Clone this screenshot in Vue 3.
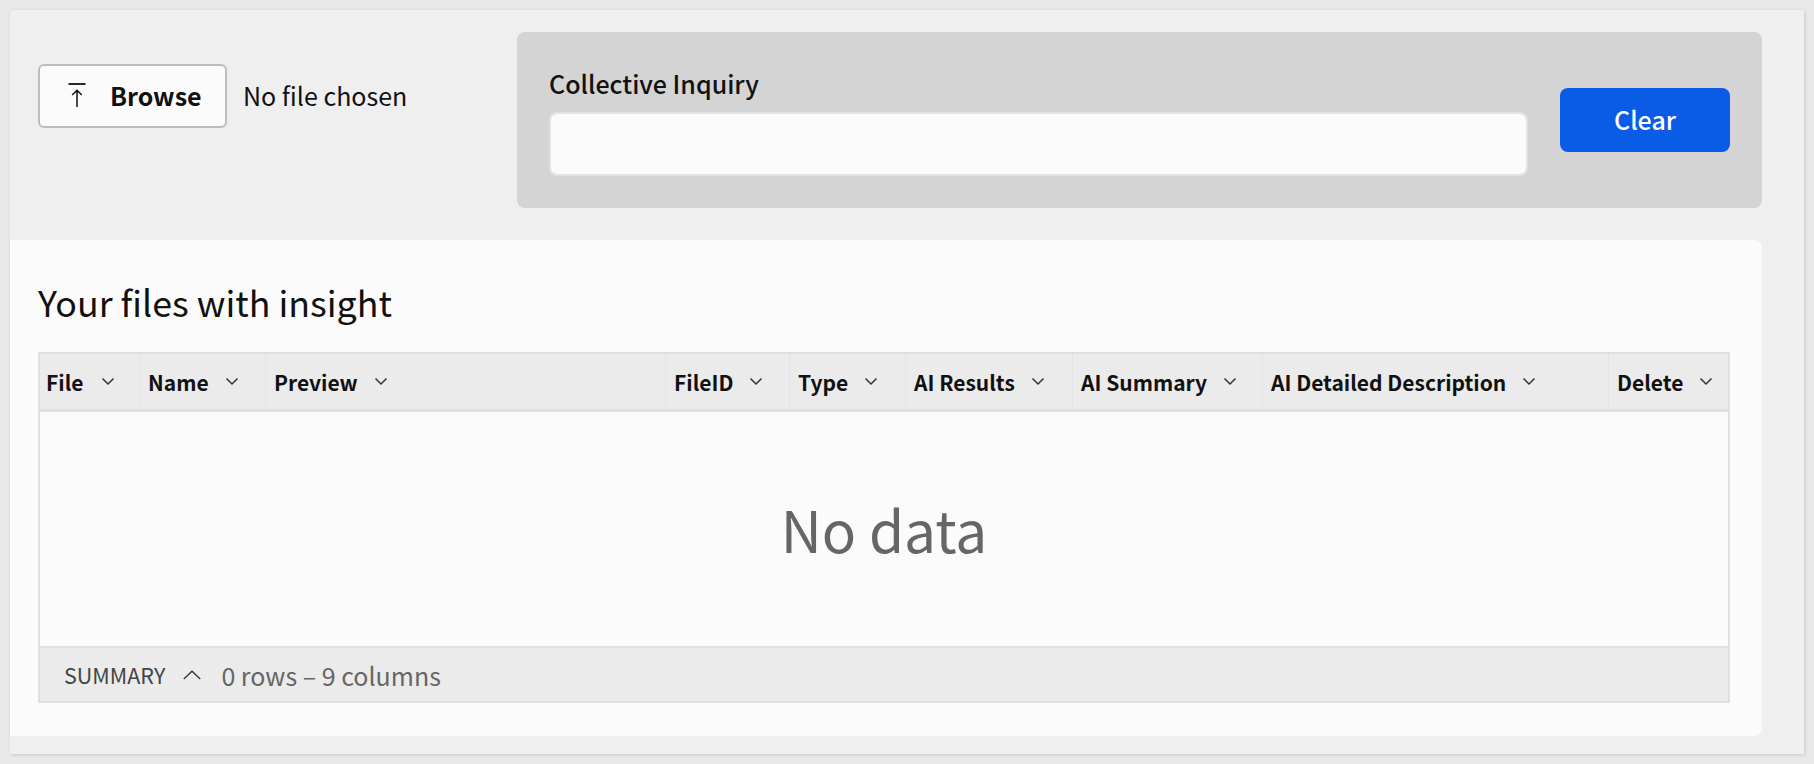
<template>
  <div class="page">
    <div class="panel">
      <div class="top-row">
        <div class="file-side">
          <button class="browse-btn">
            <svg class="upload-icon" width="18" height="24" viewBox="0 0 18 24">
              <path d="M0.5 1h17" fill="none" stroke="#111" stroke-width="1.8" />
              <path d="M9 7.5V24M4.2 12L9 7.2l4.8 4.8" fill="none" stroke="#111" stroke-width="1.5" />
            </svg>
            <span>Browse</span>
          </button>
          <span class="file-name">No file chosen</span>
        </div>
        <div class="inquiry">
          <div class="inquiry-field">
            <label class="inquiry-label">Collective Inquiry</label>
            <input class="inquiry-input" type="text" />
          </div>
          <button class="clear-btn">Clear</button>
        </div>
      </div>

      <div class="card">
        <h2 class="card-title">Your files with insight</h2>
        <div class="table">
          <div class="thead">
            <div v-for="col in columns" :key="col" class="th">
              <span>{{ col }}</span>
              <svg width="14" height="9" viewBox="0 0 14 9">
                <path d="M1.5 1.5L7 7l5.5-5.5" fill="none" stroke="#333" stroke-width="1.5" />
              </svg>
            </div>
          </div>
          <div class="tbody">No data</div>
          <div class="tfoot">
            <span class="summary">SUMMARY</span>
            <svg width="18" height="10" viewBox="0 0 18 10">
              <path d="M0.8 9L9 1.2 17.2 9" fill="none" stroke="#333" stroke-width="1.3" />
            </svg>
            <span class="counts">0 rows – 9 columns</span>
          </div>
        </div>
      </div>
    </div>
  </div>
</template>

<script setup>
const columns = [
  'File',
  'Name',
  'Preview',
  'FileID',
  'Type',
  'AI Results',
  'AI Summary',
  'AI Detailed Description',
  'Delete'
]
</script>

<style>
html, body {
  margin: 0;
  background: #e9e9e9;
}
</style>

<style scoped>
.page {
  height: 764px;
  padding: 10px;
  box-sizing: border-box;
  font-family: "Noto Sans CJK JP", "Noto Sans", sans-serif;
  color: #111;
  overflow: hidden;
}

.panel {
  height: 744px;
  background: #efefef;
  box-shadow: 1px 1px 4px rgba(0, 0, 0, 0.14);
  padding: 22px 42px 18px 0;
  box-sizing: border-box;
  display: flex;
  flex-direction: column;
}

.top-row {
  display: flex;
  height: 176px;
}

.file-side {
  width: 507px;
  padding: 32px 0 0 28px;
  box-sizing: border-box;
  display: flex;
  align-items: flex-start;
  gap: 16px;
}

.browse-btn {
  width: 189px;
  height: 64px;
  box-sizing: border-box;
  background: #fbfbfb;
  border: 2px solid #bdbdbd;
  border-radius: 6px;
  display: flex;
  align-items: center;
  padding: 0 0 2px 28px;
  gap: 24px;
  font-family: inherit;
  font-size: 25px;
  font-weight: 700;
  line-height: 32px;
  color: #111;
}

.upload-icon {
  flex-shrink: 0;
}

.file-name {
  font-size: 25px;
  line-height: 62px;
}

.inquiry {
  flex: 1;
  background: #d4d4d4;
  border-radius: 8px;
  padding: 0 32px;
  display: flex;
  align-items: center;
  gap: 32px;
}

.inquiry-field {
  flex: 1;
  padding-top: 33px;
  align-self: flex-start;
}

.inquiry-label {
  display: block;
  font-size: 25px;
  font-weight: 500;
  line-height: 36px;
  height: 47px;
}

.inquiry-input {
  display: block;
  width: 100%;
  height: 64px;
  box-sizing: border-box;
  background: #fbfbfb;
  border: 2px solid #e2e2e2;
  border-radius: 8px;
  outline: none;
}

.clear-btn {
  width: 170px;
  height: 64px;
  padding: 0 0 2px;
  background: #0a5ce6;
  border: none;
  border-radius: 8px;
  color: #fff;
  font-family: inherit;
  font-size: 25px;
  font-weight: 500;
  line-height: 32px;
  flex-shrink: 0;
}

.card {
  margin-top: 32px;
  flex: 1;
  background: #fbfbfb;
  border-radius: 0 8px 8px 0;
  padding: 40px 32px 33px 28px;
  display: flex;
  flex-direction: column;
}

.card-title {
  margin: 0;
  font-size: 35.75px;
  font-weight: 400;
  line-height: 44px;
  height: 72px;
}

.table {
  flex: 1;
  border: 2px solid #e0e0e0;
  display: flex;
  flex-direction: column;
}

.thead {
  display: grid;
  grid-template-columns: 100px 126px 400px 124px 116px 167px 190px 346px 1fr;
  height: 55px;
  background: #ebebeb;
  border-bottom: 3px solid #e0e0e0;
}

.th {
  display: flex;
  align-items: center;
  gap: 16px;
  padding-left: 8px;
  border-right: 1px solid #e3e3e3;
  font-size: 21px;
  font-weight: 700;
  line-height: 28px;
  min-width: 0;
  white-space: nowrap;
}

.th:first-child {
  padding-left: 6px;
  gap: 17px;
}

.th:last-child {
  border-right: none;
}

.tbody {
  flex: 1;
  padding-bottom: 3px;
  display: flex;
  align-items: center;
  justify-content: center;
  font-size: 56.8px;
  color: #666;
  line-height: 80px;
}

.tfoot {
  height: 53px;
  flex-shrink: 0;
  background: #ebebeb;
  border-top: 2px solid #e0e0e0;
  display: flex;
  align-items: center;
  padding-left: 24px;
  font-size: 25px;
  line-height: 32px;
  color: #666;
}

.summary {
  font-size: 21.5px;
  color: #444;
  margin-right: 18px;
}

.tfoot svg {
  margin-right: 20px;
}
</style>
